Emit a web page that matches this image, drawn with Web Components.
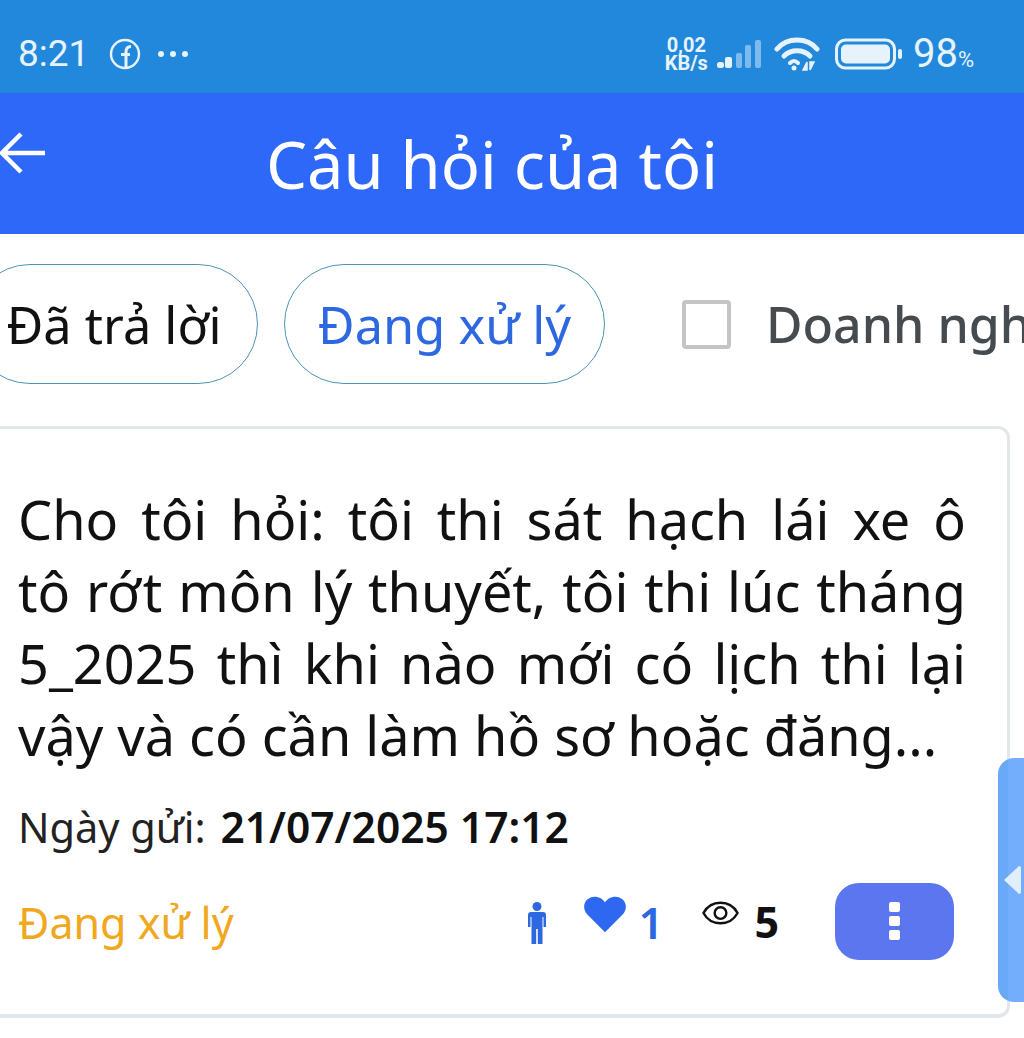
<!DOCTYPE html>
<html lang="vi">
<head>
<meta charset="utf-8">
<title>Câu hỏi của tôi</title>
<style>
    html, body { margin: 0; padding: 0; background: #fff; }
    body { width: 1024px; height: 1038px; overflow: hidden; position: relative; font-family: "Noto Sans", sans-serif; }
    question-card > div { text-align-last: justify; white-space: nowrap; }
    question-card > div:last-child { text-align-last: left; }
</style>
</head>
<body>
<status-bar></status-bar>
<app-header>Câu hỏi của tôi</app-header>
<filter-row></filter-row>
<question-card date="21/07/2025 17:12" likes="1" views="5">
    <div>Cho tôi hỏi: tôi thi sát hạch lái xe ô</div>
    <div>tô rớt môn lý thuyết, tôi thi lúc tháng</div>
    <div>5_2025 thì khi nào mới có lịch thi lại</div>
    <div>vậy và có cần làm hồ sơ hoặc đăng...</div>
</question-card>
<side-handle></side-handle>
<script>
class StatusBar extends HTMLElement {
    constructor() {
        super();
        this.attachShadow({ mode: "open" });
        this.shadowRoot.innerHTML = /*html*/ `
            <style>
                :host { display: flex; align-items: center; height: 93px; background: #2288DB; color: #E6F3FC; padding: 14px 50px 0 18px; box-sizing: border-box; font-family: Roboto, sans-serif; }
                .time { font-size: 37px; }
                .fb { margin-left: 20px; display: block; }
                .dots { margin-left: 16px; display: block; }
                .right { margin-left: auto; display: flex; align-items: center; }
                .speed { font-size: 20px; line-height: 18px; font-weight: 700; text-align: center; }
                .signal { margin-left: 9px; display: block; }
                .wifi { margin-left: 13px; display: block; }
                .battery { margin-left: 15px; display: block; }
                .pct { margin-left: 10px; font-size: 40px; }
                .pct small { font-size: 22px; }
            </style>
            <span class="time">8:21</span>
            <svg class="fb" width="32" height="32" viewBox="0 0 32 32" fill="none" stroke="currentColor" stroke-width="2.4">
                <circle cx="16" cy="16" r="14"/>
                <path d="M17 30V14c0-4 1.500-5.500 5-5.500M12 16.500h9" stroke-width="3"/>
            </svg>
            <svg class="dots" width="32" height="8" viewBox="0 0 32 8" fill="currentColor">
                <circle cx="4" cy="4" r="3"/><circle cx="16" cy="4" r="3"/><circle cx="28" cy="4" r="3"/>
            </svg>
            <div class="right">
                <div class="speed">0,02<br>KB/s</div>
                <svg class="signal" width="44" height="30" viewBox="0 0 44 30">
                    <rect x="0" y="23" width="7" height="6" rx="2.500" fill="#E6F3FC"/>
                    <rect x="8" y="18" width="7" height="11" rx="2" fill="#E6F3FC"/>
                    <rect x="19" y="14" width="6" height="15" rx="2" fill="#7DBBEE"/>
                    <rect x="28" y="6" width="6" height="23" rx="2" fill="#7DBBEE"/>
                    <rect x="38" y="1" width="6" height="28" rx="2" fill="#7DBBEE"/>
                </svg>
                <svg class="wifi" width="46" height="34" viewBox="0 0 46 34" fill="none" stroke="currentColor" stroke-width="5" stroke-linecap="round">
                    <path d="M3 12C13 0 33 0 43 12"/>
                    <path d="M10 19c7-7 19-7 26 0"/>
                    <path d="M16 26c3-3 5-3 8 0" stroke-width="4"/>
                    <circle cx="20" cy="31" r="2.500" fill="currentColor" stroke="none"/>
                    <path d="M33 33v-8l-4 8zM36 25v8l4-8z" fill="currentColor" stroke="currentColor" stroke-width="1.500" stroke-linecap="butt"/>
                </svg>
                <svg class="battery" width="68" height="32" viewBox="0 0 68 32">
                    <rect x="1.500" y="2" width="58" height="28" rx="9" fill="none" stroke="currentColor" stroke-width="3"/>
                    <rect x="6" y="6.500" width="49" height="19" rx="5" fill="currentColor"/>
                    <rect x="63" y="11" width="4" height="10" rx="2" fill="currentColor"/>
                </svg>
                <span class="pct">98<small>%</small></span>
            </div>
        `;
    }
}
customElements.define("status-bar", StatusBar);

class AppHeader extends HTMLElement {
    constructor() {
        super();
        this.attachShadow({ mode: "open" });
        this.shadowRoot.innerHTML = /*html*/ `
            <style>
                :host { display: flex; align-items: center; justify-content: center; height: 141px; background: #2E68F8; color: #fff; position: relative; font-size: 65px; font-family: "Noto Sans", sans-serif; }
                .back { position: absolute; left: -2px; top: 38px; }
                .title { margin-left: -40px; }
            </style>
            <svg class="back" width="50" height="46" viewBox="0 0 50 46" fill="none" stroke="#fff" stroke-width="4.500">
                <path d="M47 22H4M23 3L4 22l19 19"/>
            </svg>
            <span class="title"><slot></slot></span>
        `;
    }
}
customElements.define("app-header", AppHeader);

class FilterPill extends HTMLElement {
    constructor() {
        super();
        this.attachShadow({ mode: "open" });
        this.shadowRoot.innerHTML = /*html*/ `
            <style>
                :host { display: flex; align-items: center; justify-content: center; flex: none; height: 120px; box-sizing: border-box; border: 1px solid #4E93B5; border-radius: 60px; font-size: 50.500px; color: var(--pill-color, #111); }
            </style>
            <slot></slot>
        `;
    }
}
customElements.define("filter-pill", FilterPill);

class FilterRow extends HTMLElement {
    constructor() {
        super();
        this.attachShadow({ mode: "open" });
        this.shadowRoot.innerHTML = /*html*/ `
            <style>
                :host { display: flex; align-items: center; margin: 30px 0 0 -30px; height: 120px; width: 1054px; overflow: hidden; font-family: "Noto Sans", sans-serif; white-space: nowrap; }
                .a { width: 288px; }
                .b { width: 321px; margin-left: 26px; --pill-color: #2E68E0; }
                .box { width: 49px; height: 49px; box-sizing: border-box; border: 4px solid #C4C4C4; border-radius: 4px; margin-left: 77px; flex: none; }
                .label { margin-left: 35px; font-size: 50px; font-weight: 500; color: #464B50; }
            </style>
            <filter-pill class="a">Đã trả lời</filter-pill>
            <filter-pill class="b">Đang xử lý</filter-pill>
            <span class="box"></span>
            <span class="label">Doanh nghiệp</span>
        `;
    }
}
customElements.define("filter-row", FilterRow);

class QuestionCard extends HTMLElement {
    constructor() {
        super();
        this.attachShadow({ mode: "open" });
        this.shadowRoot.innerHTML = /*html*/ `
            <style>
                :host { display: block; width: 1030px; height: 592px; margin: 42px 0 0 -20px; box-sizing: border-box; border: 3px solid #E3E7EC; border-bottom-width: 4px; border-radius: 12px; background: #fff; padding: 54px 41px 0 35px; font-family: "Noto Sans", sans-serif; }
                .body { font-size: 54px; line-height: 72px; color: #111; }
                .date { margin-top: 28px; font-size: 41.500px; line-height: 56px; color: #222; }
                .date b { font-size: 42.500px; font-weight: 600; color: #111; margin-left: 4px; }
                .foot { display: flex; align-items: center; margin-top: 28px; height: 77px; }
                .state { font-size: 43px; color: #F0A81E; margin-top: 2px; }
                .stats { margin-left: auto; display: flex; align-items: center; margin-right: 12px; }
                .person { display: block; margin-right: 38px; margin-top: 2px; }
                .heart { display: block; margin-top: -15px; }
                .likes { font-size: 44px; font-weight: 600; color: #2E68E0; margin-left: 12px; width: 30px; }
                .eye { display: block; margin-left: 34px; margin-top: -18px; }
                .views { font-size: 43px; font-weight: 700; color: #111; margin-left: 15px; }
                .more { width: 119px; height: 77px; border-radius: 24px; background: #5C76F0; margin-left: 56px; display: flex; align-items: center; justify-content: center; }
            </style>
            <div class="body"><slot></slot></div>
            <div class="date">Ngày gửi: <b></b></div>
            <div class="foot">
                <span class="state">Đang xử lý</span>
                <div class="stats">
                    <svg class="person" width="18" height="42" viewBox="0 0 18 42" fill="#2E68E0">
                        <circle cx="9" cy="4.500" r="4.500"/>
                        <path d="M3 10h12a3 3 0 0 1 3 3v12h-2.500V15h-1v27H9.800V27H8.200v15H3.500V15h-1v10H0V13a3 3 0 0 1 3-3z"/>
                    </svg>
                    <svg class="heart" width="42" height="37" viewBox="0 0 44 37" fill="#2E68F0">
                        <path d="M22 37L3 18C-4 9 3 0 11 0c5 0 9 2.500 11 6 2-3.500 6-6 11-6 8 0 15 9 8 18z"/>
                    </svg>
                    <span class="likes"></span>
                    <svg class="eye" width="37" height="28" viewBox="0 0 38 28" fill="none" stroke="#111" stroke-width="2.500">
                        <path d="M1.500 14C9 0 29 0 36.500 14 29 28 9 28 1.500 14z"/>
                        <circle cx="19" cy="14" r="6"/>
                    </svg>
                    <span class="views"></span>
                    <div class="more">
                        <svg width="12" height="40" viewBox="0 0 12 40" fill="#fff">
                            <rect y="0" width="11" height="10" rx="2"/><rect y="14" width="11" height="10" rx="2"/><rect y="28" width="11" height="10" rx="2"/>
                        </svg>
                    </div>
                </div>
            </div>
        `;
    }

    connectedCallback() {
        this.shadowRoot.querySelector(".date b").textContent = this.getAttribute("date") || "";
        this.shadowRoot.querySelector(".likes").textContent = this.getAttribute("likes") || "0";
        this.shadowRoot.querySelector(".views").textContent = this.getAttribute("views") || "0";
    }
}
customElements.define("question-card", QuestionCard);

class SideHandle extends HTMLElement {
    constructor() {
        super();
        this.attachShadow({ mode: "open" });
        this.shadowRoot.innerHTML = /*html*/ `
            <style>
                :host { position: absolute; left: 998px; top: 758px; width: 26px; height: 244px; background: linear-gradient(90deg, #6AA8F8 0 10px, #72AEFC 10px); border-radius: 16px 0 0 16px; }
                svg { position: absolute; left: 5px; top: 107px; }
            </style>
            <svg width="18" height="30" viewBox="0 0 18 30"><path d="M16 1a2 2 0 0 1 2 2v24a2 2 0 0 1-2 2L1 15z" fill="#E2EEFD"/></svg>
        `;
    }
}
customElements.define("side-handle", SideHandle);
</script>
</body>
</html>
